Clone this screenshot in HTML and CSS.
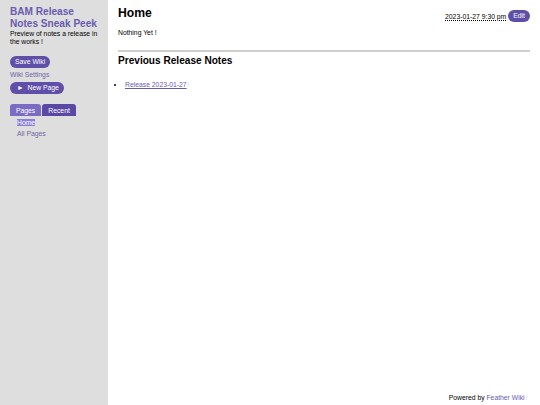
FILE: index.html
```html
<!DOCTYPE html>
<html lang="en">
<head>
  <meta charset="UTF-8">
  <meta name="viewport" content="width=device-width, initial-scale=1.0">
  <title>BAM Release Notes Sneak Peek</title>
  <link rel="stylesheet" href="styles.css">
</head>
<body>
  <div class="wiki">
    <aside class="sidebar">
      <div class="wiki-title">BAM Release Notes Sneak Peek</div>
      <p class="wiki-desc">Preview of notes a release in the works !</p>
      <button class="btn">Save Wiki</button>
      <a class="settings" href="#">Wiki Settings</a>
      <button class="btn new-page">&#9658;&nbsp; New Page</button>
      <div class="tabs">
        <button class="tab active">Pages</button>
        <button class="tab">Recent</button>
      </div>
      <ul class="page-list">
        <li><a class="current" href="#">Home</a></li>
        <li><a href="#">All Pages</a></li>
      </ul>
    </aside>

    <main class="content">
      <header class="page-head">
        <h1>Home</h1>
        <div class="meta">
          <span class="date">2023-01-27 9:30 pm</span>
          <button class="btn edit">Edit</button>
        </div>
      </header>
      <p class="body-text">Nothing Yet !</p>
      <hr>
      <h2>Previous Release Notes</h2>
      <ul class="notes">
        <li><a href="#">Release 2023-01-27</a><span class="mark">!</span></li>
      </ul>
      <footer class="foot">Powered by <a href="#">Feather Wiki</a><span class="mark">!</span></footer>
    </main>
  </div>
</body>
</html>
```

FILE: styles.css
```css
body {
  margin: 0;
  font-family: "Liberation Sans", Arial, sans-serif;
  font-size: 6.8px;
  color: #000;
  background: #fff;
}

.wiki {
  display: flex;
  min-height: 405px;
}

.sidebar {
  width: 88px;
  padding: 6px 10px;
  background-color: #dedede;
}

.wiki-title {
  font-size: 10.1px;
  font-weight: bold;
  line-height: 12px;
  color: #6a5bb0;
}

.wiki-desc {
  margin: 0 0 10px 0;
  line-height: 8px;
}

.btn {
  display: block;
  font-family: inherit;
  font-size: 6.8px;
  color: #fff;
  background-color: #5f4fa8;
  border: none;
  border-radius: 6px;
  padding: 0 5px;
  height: 12px;
  line-height: 12px;
  cursor: pointer;
}

.settings {
  display: block;
  margin: 2px 0 3px 0;
  color: #6e64a4;
  text-decoration: none;
  line-height: 9px;
}

.new-page {
  width: 54px;
  padding-left: 7px;
  text-align: left;
}

.tabs {
  display: flex;
  gap: 1px;
  margin-top: 10px;
}

.tab {
  font-family: inherit;
  font-size: 6.8px;
  color: #fff;
  background-color: #5a48a4;
  border: none;
  border-radius: 3px 3px 0 0;
  height: 12px;
  padding: 0 6px;
  cursor: pointer;
}

.tab.active {
  background-color: #7a6cc2;
}

.page-list {
  list-style: none;
  margin: 1px 0 0 0;
  padding: 0 0 0 7px;
  line-height: 11px;
}

.page-list a {
  color: #6e64a4;
  text-decoration: none;
}

.page-list a.current {
  color: #fff;
  background-color: #8a7fd6;
}

.content {
  flex: 1;
  display: flex;
  flex-direction: column;
  padding: 0 10px;
}

.page-head {
  display: flex;
  justify-content: space-between;
  align-items: flex-start;
  padding-top: 6px;
}

h1 {
  margin: 0;
  font-size: 12.2px;
  line-height: 14px;
}

.meta {
  display: flex;
  align-items: center;
  gap: 2px;
  padding-top: 4px;
}

.date {
  text-decoration: underline dotted;
}

.edit {
  padding: 0 5px;
  height: 12px;
}

.body-text {
  margin: 7px 0 14px 0;
}

hr {
  width: 100%;
  margin: 0;
  border: none;
  border-top: 2px solid #cfcfcf;
}

h2 {
  margin: 3px 0 0 0;
  font-size: 10.1px;
  line-height: 12px;
}

.notes {
  margin: 14px 0 0 0;
  padding-left: 7px;
  line-height: 8px;
}

.notes a,
.foot a {
  color: #6a5bb0;
}

.foot a {
  text-decoration: none;
}

.mark {
  color: #c4bde6;
  font-size: 5px;
  margin-left: 1px;
}

.foot {
  margin-top: auto;
  text-align: right;
  padding: 0 3px 4px 0;
}
```
